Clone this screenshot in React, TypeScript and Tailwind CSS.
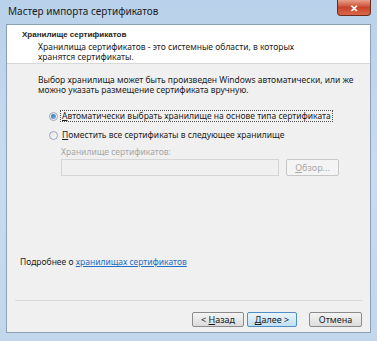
import React from "react";

const font = { fontFamily: '"Noto Sans", "Open Sans", sans-serif' };

function Radio({ checked }: { checked?: boolean }) {
  return (
    <span className="relative flex h-[9px] w-[9px] shrink-0 items-center justify-center rounded-full border border-[#9aa8b8] bg-gradient-to-br from-[#e2e6ea] to-[#fafafa]">
      {checked && (
        <span className="h-[5px] w-[5px] rounded-full bg-gradient-to-br from-[#2c6fb3] to-[#7fb6e6]" />
      )}
    </span>
  );
}

function Btn({ children, primary, disabled, w }: { children: React.ReactNode; primary?: boolean; disabled?: boolean; w: string }) {
  const base =
    "flex items-center justify-center rounded-[2px] border text-[9px] leading-none " + w + " ";
  const style = primary
    ? "border-[#4f8fc6] bg-gradient-to-b from-[#e9f5fd] to-[#bfe0f6] text-[#1a1a1a]"
    : disabled
    ? "border-[#c7c7c7] bg-[#f4f4f4] text-[#a8a8a8]"
    : "border-[#8b8b8b] bg-gradient-to-b from-[#f4f4f4] to-[#dcdcdc] text-[#1a1a1a]";
  return <div className={base + style}>{children}</div>;
}

export default function App() {
  return (
    <div
      className="flex h-[341px] w-[377px] flex-col overflow-hidden bg-gradient-to-b from-[#b9d1ea] via-[#c9dbef] to-[#c2d6ec]"
      style={font}
    >
      {/* title bar */}
      <div className="flex h-[24px] shrink-0 items-start">
        <div className="pl-[8px] pt-[5px] text-[10px] leading-[12px] text-[#1b1b1b]">Мастер импорта сертификатов</div>
        <div className="ml-auto mr-[6px] flex h-[16px] w-[34px] items-center justify-center rounded-b-[4px] border border-t-0 border-[#6b2a1c] bg-gradient-to-b from-[#e6a08a] via-[#c9432a] to-[#d9684a] text-[10px] font-bold leading-none text-white">
          ✕
        </div>
      </div>

      {/* client */}
      <div className="mx-[6px] mb-[8px] flex flex-1 flex-col border border-[#8aa0b8] bg-[#f0f0f0] text-[8.5px] leading-[10px] text-[#1e1e1e]">
        {/* header */}
        <div className="flex h-[39px] shrink-0 flex-col border-b border-[#d8d8d8] bg-white pl-[15px] pt-[5px]">
          <div
            className="text-[8px] font-bold leading-[10px]"
            style={{ fontFamily: '"Liberation Sans", Arial, sans-serif' }}
          >
            Хранилище сертификатов
          </div>
          <div className="mt-[2px] pl-[16px] leading-[10px]">
            Хранилища сертификатов - это системные области, в которых
            <br />
            хранятся сертификаты.
          </div>
        </div>

        {/* body */}
        <div className="flex flex-1 flex-col pl-[31px] pt-[11px]">
          <div className="leading-[10px]">
            Выбор хранилища может быть произведен Windows автоматически, или же
            <br />
            можно указать размещение сертификата вручную.
          </div>
          <div className="mt-[15px] flex flex-col gap-[8px] pl-[11px]">
            <div className="flex items-center gap-[2px]">
              <Radio checked />
              <span className="border border-dotted border-[#555] px-[1px]">
                <span className="underline">А</span>втоматически выбрать хранилище на основе типа сертификата
              </span>
            </div>
            <div className="flex items-center gap-[2px]">
              <Radio />
              <span className="px-[2px]">
                <span className="underline">П</span>оместить все сертификаты в следующее хранилище
              </span>
            </div>
          </div>
          <div className="mt-[7px] pl-[23px] text-[#a7a7a7]">Хранилище сертификатов:</div>
          <div className="mt-[2px] flex items-center pl-[23px]">
            <div className="h-[17px] w-[218px] border border-[#d5d5d5] bg-[#f0f0f0]" />
            <div className="ml-[7px]">
              <Btn disabled w="w-[53px] h-[17px]">
                <span className="underline">О</span>бзор...
              </Btn>
            </div>
          </div>
        </div>

        <div className="pb-[33px] pl-[13px]">
          Подробнее о{" "}
          <span className="text-[#1f6fc4] underline">хранилищах сертификатов</span>
        </div>

        {/* footer */}
        <div className="mx-[8px] border-t border-[#d9d9d9]" />
        <div className="flex items-center justify-end gap-[3px] pb-[5px] pr-[8px] pt-[11px]">
          <Btn w="w-[52px] h-[15px]">
            &lt;&nbsp;<span className="underline">Н</span>азад
          </Btn>
          <Btn primary w="w-[50px] h-[15px]">
            <span className="underline">Д</span>алее &gt;
          </Btn>
          <div className="ml-[9px]">
            <Btn w="w-[53px] h-[15px]">Отмена</Btn>
          </div>
        </div>
      </div>
    </div>
  );
}
